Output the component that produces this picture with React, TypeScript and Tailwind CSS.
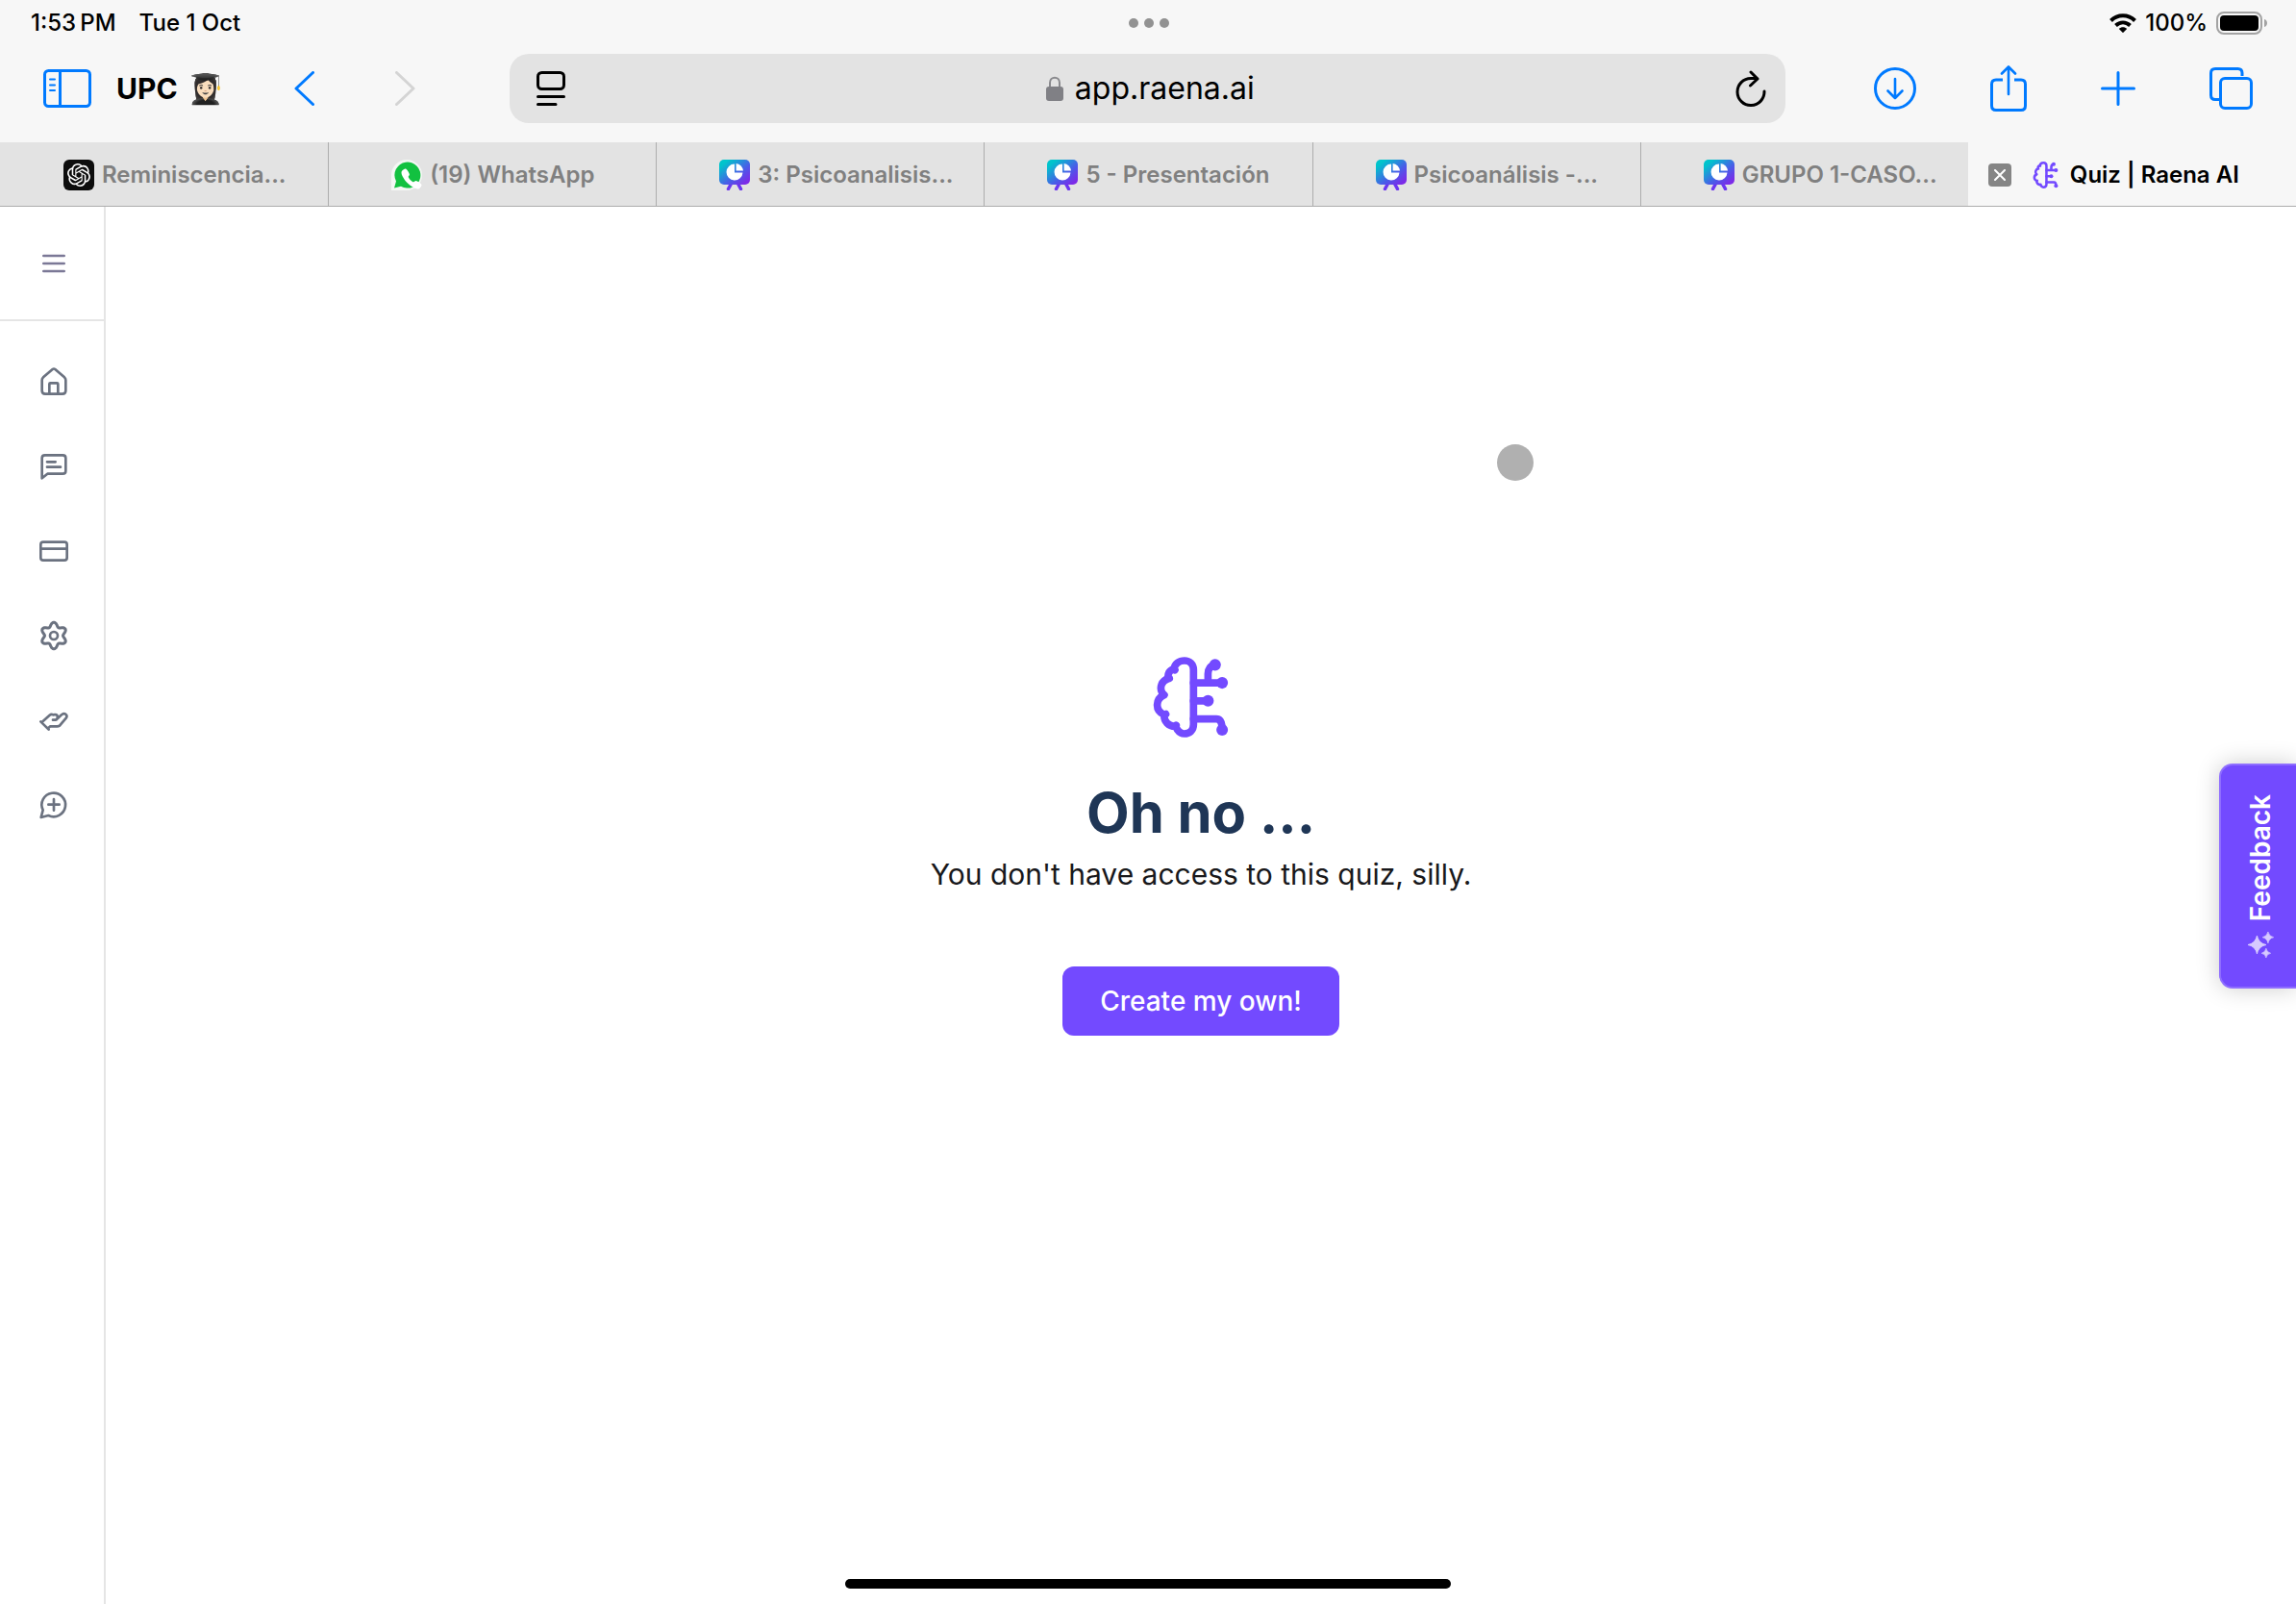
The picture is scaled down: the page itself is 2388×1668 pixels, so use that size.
import type { ReactNode } from 'react'
import { IoCall } from 'react-icons/io5'
import { SiOpenai } from 'react-icons/si'

type Favicon = 'openai' | 'whatsapp' | 'slides'

const backgroundTabs: { title: string; icon: Favicon }[] = [
  { title: 'Reminiscencia...', icon: 'openai' },
  { title: '(19) WhatsApp', icon: 'whatsapp' },
  { title: '3: Psicoanalisis...', icon: 'slides' },
  { title: '5 - Presentación', icon: 'slides' },
  { title: 'Psicoanálisis -...', icon: 'slides' },
  { title: 'GRUPO 1-CASO...', icon: 'slides' },
]

// Six-lobed gear outline around (48, 48)
const gearPath =
  Array.from({ length: 72 }, (_, i) => {
    const a = (i / 72) * Math.PI * 2
    const r = 35 + 6.5 * Math.cos(6 * a)
    return `${i === 0 ? 'M' : 'L'}${(48 + r * Math.sin(a)).toFixed(1)} ${(48 - r * Math.cos(a)).toFixed(1)}`
  }).join('') + 'Z'

function BrainLogo({ className }: { className: string }) {
  return (
    <svg
      viewBox="57 39 235 251"
      className={className}
      fill="none"
      stroke="currentColor"
      strokeWidth="23"
      strokeLinejoin="round"
      strokeLinecap="round"
    >
      <path d="M183 80C183 62 170 51 155 51C138 51 125 61 122 77L125 80M122 77C108 80 102 92 104 107L108 106M104 107C84 113 76 135 86 152L92 158C64 170 62 206 92 219L97 217M92 219C90 240 106 256 127 255L129 252M127 255C134 271 144 278 154 278C170 278 183 268 183 250V80" />
      <path d="M183 120H272M228 120V92C228 76 236 66 250 64M183 176H228M183 232H254C266 232 272 245 272 266" />
      <g fill="currentColor" stroke="none">
        <circle cx="272" cy="120" r="18" />
        <circle cx="250" cy="64" r="18" />
        <circle cx="228" cy="176" r="18" />
        <circle cx="272" cy="266" r="18" />
      </g>
    </svg>
  )
}

function TabIcon({ icon }: { icon: Favicon }) {
  if (icon === 'openai') {
    return (
      <span className="flex size-8 shrink-0 items-center justify-center rounded-md bg-[#0d0d0d] text-white">
        <SiOpenai className="size-6" />
      </span>
    )
  }
  if (icon === 'whatsapp') {
    return (
      <svg viewBox="0 0 32 32" className="size-8 shrink-0">
        <path d="M0 32V16A16 16 0 1 1 16 32Z" fill="#f4f7f4" />
        <path d="M3 29.500L5 22.500A13.500 13.500 0 1 1 10 27.700Z" fill="#12c140" />
        <IoCall x="9" y="8" width="15" height="15" color="#fff" />
      </svg>
    )
  }
  return (
    <svg viewBox="0 0 32 32" className="size-8 shrink-0">
      <defs>
        <linearGradient id="slides" x1="0" y1="0" x2="1" y2="1">
          <stop offset="0.15" stopColor="#00c4cc" />
          <stop offset="0.6" stopColor="#4a5be8" />
          <stop offset="0.9" stopColor="#7d2ae8" />
        </linearGradient>
      </defs>
      <path d="M13 24L9.500 30.500M19 24L22.500 30.500" stroke="#6c35f0" strokeWidth="3.500" strokeLinecap="round" />
      <rect width="32" height="26" rx="5" fill="url(#slides)" />
      <path d="M16 4.500A8.500 8.500 0 1 0 24.500 13.500H16Z" fill="#fff" />
      <path d="M17.600 4A8.500 8.500 0 0 1 25 11.600H17.600Z" fill="#fff" />
    </svg>
  )
}

function StatusBar() {
  return (
    <div className="grid h-12 grid-cols-3 items-center pr-[29px] pl-8 text-2xl font-medium">
      <div className="flex gap-6">
        <span>{'1:53\u202fPM'}</span>
        <span>Tue 1 Oct</span>
      </div>
      <div className="flex justify-center gap-[6px]">
        <span className="size-[10px] rounded-full bg-[#929292]" />
        <span className="size-[10px] rounded-full bg-[#929292]" />
        <span className="size-[10px] rounded-full bg-[#929292]" />
      </div>
      <div className="flex items-center justify-end gap-[9px]">
        <svg viewBox="0 0 28 20" className="h-5 w-7" fill="none" stroke="currentColor" strokeWidth="4">
          <path d="M1.500 7.500C8.500 0.500 19.500 0.500 26.500 7.500" />
          <path d="M6.500 12.500C11 8.500 17 8.500 21.500 12.500" />
          <path d="M9.800 16C12.200 13.500 15.800 13.500 18.200 16L14 20.200Z" fill="currentColor" stroke="none" />
        </svg>
        <span>100%</span>
        <svg viewBox="0 0 54 24" className="h-6 w-[54px]">
          <rect x="1" y="1" width="46" height="22" rx="7" fill="none" stroke="#a3a3a3" strokeWidth="2" />
          <rect x="4" y="4" width="40" height="16" rx="4" />
          <path d="M50 8C54 9 54 15 50 16Z" fill="#a3a3a3" />
        </svg>
      </div>
    </div>
  )
}

function ToolButton({ label, children }: { label: string; children: ReactNode }) {
  return (
    <button type="button" aria-label={label} className="shrink-0 text-[#007aff]">
      {children}
    </button>
  )
}

const line = {
  fill: 'none',
  stroke: 'currentColor',
  strokeWidth: 3,
  strokeLinecap: 'round',
  strokeLinejoin: 'round',
} as const

function Toolbar() {
  return (
    <div className="flex h-[100px] items-center pr-[45px] pb-3 pl-[45px]">
      <ToolButton label="Show sidebar">
        <svg viewBox="0 0 50 40" className="h-10 w-[50px]" {...line}>
          <rect x="1.500" y="1.500" width="47" height="37" rx="4" />
          <path d="M17.500 1.500V38.500" />
          <path d="M7 10.500H12M7 16.500H12M7 22H12" strokeWidth="2" />
        </svg>
      </ToolButton>
      <button type="button" className="ml-[26px] flex items-center gap-[10px] text-3xl font-bold">
        UPC
        <span className="w-[34px] text-[30px]">👩🏻‍🎓</span>
      </button>
      <div className="ml-[77px] flex gap-[84px]">
        <ToolButton label="Back">
          <svg viewBox="0 0 21 36" className="h-9 w-[21px]" {...line}>
            <path d="M19.500 1.500L2 18L19.500 34.500" />
          </svg>
        </ToolButton>
        <button type="button" aria-label="Forward" disabled className="text-[#d4d4d4]">
          <svg viewBox="0 0 21 36" className="h-9 w-[21px]" {...line}>
            <path d="M1.500 1.500L19 18L1.500 34.500" />
          </svg>
        </button>
      </div>
      <div className="mr-[92px] ml-[98px] flex h-[72px] flex-1 items-center justify-between rounded-[20px] bg-[#e3e3e3] pr-[20px] pl-7">
        <button type="button" aria-label="Page settings">
          <svg viewBox="0 0 30 36" className="h-9 w-[30px]" {...line}>
            <rect x="1.500" y="1.500" width="27" height="17" rx="4" />
            <path d="M1.500 26.500H28.500M1.500 34.500H20" />
          </svg>
        </button>
        <a href="#" className="flex items-center gap-3 text-[32px]">
          <svg viewBox="0 0 18 26" className="h-[26px] w-[18px]">
            <path d="M4 12V7C4 0 14 0 14 7V12" fill="none" stroke="#8a8a8e" strokeWidth="2" />
            <rect y="11" width="18" height="15" rx="3" fill="#808085" />
          </svg>
          app.raena.ai
        </a>
        <button type="button" aria-label="Reload">
          <svg viewBox="0 0 32 38" className="h-[38px] w-8" {...line}>
            <path d="M30 22A14 14 0 1 1 16 8.500H22" />
            <path d="M16 2L23 9L15.500 16" />
          </svg>
        </button>
      </div>
      <div className="flex items-center gap-[77px]">
        <ToolButton label="Downloads">
          <svg viewBox="0 0 44 44" className="size-11" {...line}>
            <circle cx="22" cy="22" r="20.500" />
            <path d="M22 12V32M14.500 24.500L22 32L29.500 24.500" strokeWidth="2.600" />
          </svg>
        </ToolButton>
        <ToolButton label="Share">
          <svg viewBox="0 0 38 48" className="h-12 w-[38px]" {...line}>
            <path d="M13 15H6Q1.500 15 1.500 19.500V42Q1.500 46.500 6 46.500H32Q36.500 46.500 36.500 42V19.500Q36.500 15 32 15H25" strokeLinecap="butt" />
            <path d="M19 30V2M12 8.500L19 1.500L26 8.500" strokeWidth="2.600" />
          </svg>
        </ToolButton>
        <ToolButton label="New tab">
          <svg viewBox="0 0 36 36" className="size-9" {...line}>
            <path d="M18 1.500V34.500M1.500 18H34.500" />
          </svg>
        </ToolButton>
        <ToolButton label="Tab overview">
          <svg viewBox="0 0 45 44" className="h-11 w-[45px]" {...line}>
            <rect x="11.500" y="11.500" width="32" height="31" rx="4.500" />
            <path d="M10 33.500H6Q1.500 33.500 1.500 29V6Q1.500 1.500 6 1.500H29.500Q34 1.500 34 6V9" strokeLinecap="butt" />
          </svg>
        </ToolButton>
      </div>
    </div>
  )
}

function TabBar() {
  return (
    <nav className="grid h-[67px] grid-cols-7 border-b border-[#adadad] text-2xl font-semibold">
      {backgroundTabs.map((tab) => (
        <a
          key={tab.title}
          href="#"
          className="flex items-center gap-2 border-l border-[#adadad] bg-[#e3e3e3] pt-px pl-[65px] whitespace-nowrap text-[#808080] first:border-[#e3e3e3]"
        >
          <TabIcon icon={tab.icon} />
          {tab.title}
        </a>
      ))}
      <div className="flex items-center pt-px pl-[21px] whitespace-nowrap">
        <button
          type="button"
          aria-label="Close tab"
          className="mr-[22px] flex size-6 items-center justify-center rounded-[4px] bg-[#858585] text-white"
        >
          <svg viewBox="0 0 12 12" className="size-3" {...line} strokeWidth="2">
            <path d="M1 1L11 11M11 1L1 11" />
          </svg>
        </button>
        <BrainLogo className="mr-3 h-7 w-[27px] text-[#734aff]" />
        <span>Quiz | Raena AI</span>
      </div>
    </nav>
  )
}

function NavItem({ label, children }: { label: string; children: ReactNode }) {
  return (
    <a href="#" aria-label={label} className="text-[#6b7280]">
      <svg
        viewBox="0 0 96 96"
        className="size-8"
        fill="none"
        stroke="currentColor"
        strokeWidth="8"
        strokeLinecap="round"
        strokeLinejoin="round"
      >
        {children}
      </svg>
    </a>
  )
}

function Sidebar() {
  return (
    <aside className="flex w-[110px] shrink-0 flex-col border-r-2 border-[#e5e5e5]">
      <div className="flex h-[119px] items-center justify-center border-b-2 border-[#e5e5e5] pl-1">
        <button type="button" aria-label="Open menu" className="text-[#7b7896]">
          <svg viewBox="0 0 96 96" className="size-8" stroke="currentColor" strokeWidth="8" strokeLinecap="round">
            <path d="M16 24H80M16 48H80M16 72H80" />
          </svg>
        </button>
      </div>
      <nav className="flex flex-col items-center gap-14 pt-[47px] pl-1">
        <NavItem label="Home">
          <path d="M11 43Q11 38 15 34L44 9Q48 6 52 9L81 34Q85 38 85 43V76Q85 86 75 86H21Q11 86 11 76Z" />
          <path d="M34 86V55Q34 52 37 52H58Q61 52 61 55V86" />
        </NavItem>
        <NavItem label="Chat">
          <path d="M11 85V22Q11 13 20 13H76Q85 13 85 22V62Q85 71 76 71H28Z" />
          <path d="M27 34H53M27 50H69" />
        </NavItem>
        <NavItem label="Billing">
          <rect x="7" y="20" width="82" height="57" rx="8" />
          <path d="M7 41H89" />
        </NavItem>
        <NavItem label="Settings">
          <path d={gearPath} strokeWidth="9" />
          <circle cx="48" cy="48" r="12" />
        </NavItem>
        <NavItem label="Affiliates">
          <path d="M7 52L32 77M14 51L35 32Q40 28 46 31L52 30C62 30 62 46 52 47H45M53 47Q58 46 61 41L72 31C80 23 92 31 87 40L66 65Q63 67 58 67H37L30 73" />
        </NavItem>
        <NavItem label="Send feedback">
          <path d="M8 87L14 64A37 37 0 1 1 31 81Z" />
          <path d="M48 30V65M31 47H65" />
        </NavItem>
      </nav>
    </aside>
  )
}

function FeedbackButton() {
  return (
    <button
      type="button"
      className="absolute top-[794px] right-0 flex h-[234px] w-20 flex-col items-center justify-center gap-[10px] rounded-l-[14px] border-2 border-r-0 border-[#8f6eff] bg-[#734aff] pl-1 text-[28px] leading-8 font-semibold text-white shadow-[0_0_24px_rgba(0,0,0,0.2)]"
    >
      <span className="rotate-180 [writing-mode:vertical-rl]">Feedback</span>
      <svg viewBox="174 605 80 80" className="size-[27px]" fill="#d6caff">
        <path d="M202 617Q206 641 230 645Q206 649 202 673Q198 649 174 645Q198 641 202 617Z" stroke="#d6caff" strokeWidth="3" />
        <path d="M236 605Q239 619 253 622Q239 625 236 640Q233 625 219 622Q233 619 236 605Z" stroke="#d6caff" strokeWidth="2" />
        <path d="M230 656Q232 668 244 671Q232 673 230 685Q228 673 216 671Q228 668 230 656Z" stroke="#d6caff" strokeWidth="2" />
      </svg>
    </button>
  )
}

export default function App() {
  return (
    <div className="relative flex min-h-screen flex-col overflow-hidden bg-white font-['Inter',sans-serif] text-black">
      <header className="bg-[#f7f7f7]">
        <StatusBar />
        <Toolbar />
        <TabBar />
      </header>
      <div className="flex flex-1">
        <Sidebar />
        <main className="flex flex-1 flex-col items-center justify-center pb-[124px]">
          <BrainLogo className="mr-[22px] h-[84px] w-[79px] text-[#734aff]" />
          <h1 className="mt-[42px] text-[58px] leading-[72px] font-bold text-[#1f3656]">Oh no ...</h1>
          <p className="mt-1 text-[30px] leading-12 text-[#18181b]">You don't have access to this quiz, silly.</p>
          <button
            type="button"
            className="mt-[72px] h-[72px] rounded-xl bg-[#734aff] px-[39px] text-[28px] font-medium text-white"
          >
            Create my own!
          </button>
        </main>
      </div>
      <FeedbackButton />
      {/* pointer */}
      <span className="absolute top-[462px] left-[66%] size-[38px] -translate-x-1/2 rounded-full bg-[#b0b0b0]" />
      {/* home indicator */}
      <span className="absolute bottom-4 left-1/2 h-[10px] w-[630px] -translate-x-1/2 rounded-full bg-black" />
    </div>
  )
}
